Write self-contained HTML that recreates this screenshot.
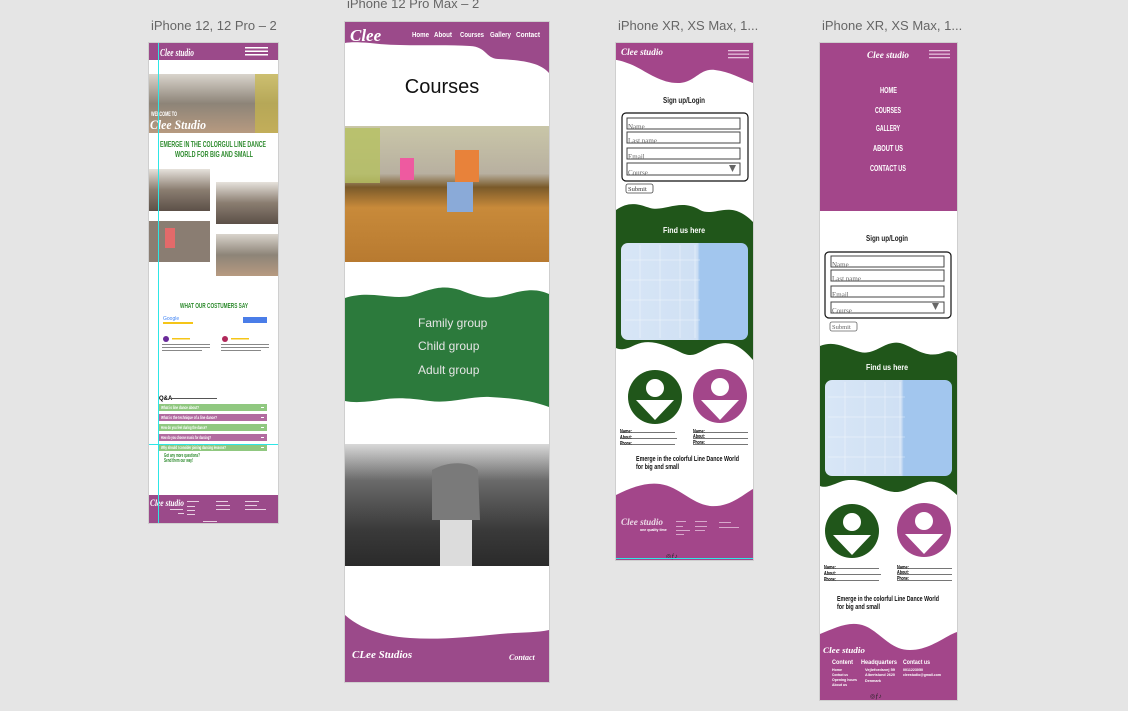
<!DOCTYPE html>
<html><head><meta charset="utf-8"><style>
html,body{margin:0;padding:0;background:#e5e5e5;width:1128px;height:711px;overflow:hidden}
svg{display:block}
.lbl{font-family:"Liberation Sans",sans-serif;font-size:13px;fill:#666}
.scr{font-family:"Liberation Serif",serif;font-style:italic;font-weight:bold;fill:#fff}
.nar{font-family:"Liberation Sans",sans-serif;font-weight:bold}
.sans{font-family:"Liberation Sans",sans-serif}
.ser{font-family:"Liberation Serif",serif}
</style></head><body>
<svg width="1128" height="711" viewBox="0 0 1128 711" xmlns="http://www.w3.org/2000/svg">
<defs>
<linearGradient id="ph1" x1="0" y1="0" x2="0" y2="1"><stop offset="0" stop-color="#d9d4cc"/><stop offset=".5" stop-color="#8d8478"/><stop offset="1" stop-color="#b79a80"/></linearGradient>
<linearGradient id="ph2" x1="0" y1="0" x2="0" y2="1"><stop offset="0" stop-color="#c9c6a8"/><stop offset=".35" stop-color="#b8b0a0"/><stop offset=".45" stop-color="#7a5a2a"/><stop offset=".6" stop-color="#c88a3a"/><stop offset="1" stop-color="#b87a30"/></linearGradient>
<linearGradient id="ph3" x1="0" y1="0" x2="0" y2="1"><stop offset="0" stop-color="#d8d8d8"/><stop offset=".3" stop-color="#6a6a6a"/><stop offset=".7" stop-color="#3a3a3a"/><stop offset="1" stop-color="#2a2a2a"/></linearGradient>
<linearGradient id="ph4" x1="0" y1="0" x2="0" y2="1"><stop offset="0" stop-color="#e6e2dc"/><stop offset=".5" stop-color="#8a7d70"/><stop offset="1" stop-color="#5c5048"/></linearGradient>
<linearGradient id="map" x1="0" y1="0" x2="1" y2="0"><stop offset="0" stop-color="#d8e6f6"/><stop offset=".6" stop-color="#cfe0f4"/><stop offset=".62" stop-color="#a2c6ee"/><stop offset="1" stop-color="#a2c6ee"/></linearGradient>
</defs>

<text class="lbl" x="151" y="30">iPhone 12, 12 Pro – 2</text>
<text class="lbl" x="347" y="8">iPhone 12 Pro Max – 2</text>
<text class="lbl" x="618" y="30">iPhone XR, XS Max, 1...</text>
<text class="lbl" x="822" y="30">iPhone XR, XS Max, 1...</text>

<!-- ===== Artboard 1 ===== -->
<rect x="148" y="42" width="131" height="482" fill="#cfcfcf"/>
<rect x="149" y="43" width="129" height="480" fill="#fff"/>
<rect x="149" y="43" width="129" height="17" fill="#9b4a8a"/>
<text class="scr" x="160" y="56" font-size="10" textLength="34" lengthAdjust="spacingAndGlyphs">Clee studio</text>
<rect x="245" y="47" width="23" height="1.5" fill="#fff"/><rect x="245" y="50.5" width="23" height="1.5" fill="#fff"/><rect x="245" y="54" width="23" height="1.5" fill="#fff"/>
<rect x="149" y="74" width="129" height="59" fill="url(#ph1)"/>
<rect x="255" y="74" width="23" height="59" fill="#c8b64a" opacity=".7"/>
<text class="nar" x="151" y="116" font-size="6" fill="#fff" textLength="26" lengthAdjust="spacingAndGlyphs">WELCOME TO</text>
<text class="scr" x="150" y="129" font-size="13" textLength="56" lengthAdjust="spacingAndGlyphs">Clee Studio</text>
<text class="nar" x="160" y="147" font-size="8" fill="#2e8b2e" textLength="106" lengthAdjust="spacingAndGlyphs">EMERGE IN THE COLORGUL LINE DANCE</text>
<text class="nar" x="175" y="157" font-size="8" fill="#2e8b2e" textLength="78" lengthAdjust="spacingAndGlyphs">WORLD FOR BIG AND SMALL</text>
<rect x="149" y="169" width="61" height="42" fill="url(#ph4)"/>
<rect x="216" y="182" width="62" height="42" fill="url(#ph4)"/>
<rect x="149" y="221" width="61" height="41" fill="#8a7d72"/>
<rect x="165" y="228" width="10" height="20" fill="#e36a6a"/>
<rect x="216" y="234" width="62" height="42" fill="url(#ph1)"/>
<text class="nar" x="180" y="308" font-size="7" fill="#2e8b2e" textLength="68" lengthAdjust="spacingAndGlyphs">WHAT OUR COSTUMERS SAY</text>
<text class="sans" x="163" y="320" font-size="5" fill="#4285f4">Google</text>
<rect x="163" y="322" width="30" height="2" fill="#f5c518"/>
<rect x="243" y="317" width="24" height="6" fill="#4a7de8"/>
<circle cx="166" cy="339" r="3" fill="#6a2a9a"/><circle cx="225" cy="339" r="3" fill="#b0285a"/>
<rect x="172" y="338" width="18" height="1.5" fill="#f5c518"/><rect x="231" y="338" width="18" height="1.5" fill="#f5c518"/>
<rect x="162" y="344" width="48" height="1" fill="#888"/><rect x="162" y="347" width="48" height="1" fill="#888"/><rect x="162" y="350" width="40" height="1" fill="#888"/>
<rect x="221" y="344" width="48" height="1" fill="#888"/><rect x="221" y="347" width="48" height="1" fill="#888"/><rect x="221" y="350" width="40" height="1" fill="#888"/>
<text class="nar" x="159" y="400" font-size="6" fill="#000">Q&amp;A</text>
<rect x="172" y="398" width="45" height="1" fill="#555"/>
<rect x="158" y="404" width="109" height="7" fill="#90c880"/>
<rect x="158" y="414" width="109" height="7" fill="#b26ba0"/>
<rect x="158" y="424" width="109" height="7" fill="#90c880"/>
<rect x="158" y="434" width="109" height="7" fill="#b26ba0"/>
<rect x="158" y="444" width="109" height="7" fill="#90c880"/>
<g class="nar" font-size="4.5" fill="#fff"><text x="161" y="409" textLength="38" lengthAdjust="spacingAndGlyphs">What is line dance about?</text><text x="161" y="419" textLength="56" lengthAdjust="spacingAndGlyphs">What is the technique of a line dance?</text><text x="161" y="429" textLength="46" lengthAdjust="spacingAndGlyphs">How do you feel during the dance?</text><text x="161" y="439" textLength="50" lengthAdjust="spacingAndGlyphs">How do you choose music for dancing?</text><text x="161" y="449" textLength="65" lengthAdjust="spacingAndGlyphs">Why should I consider joining dancing lessons?</text></g>
<rect x="261" y="407" width="3" height="1" fill="#fff"/><rect x="261" y="417" width="3" height="1" fill="#fff"/><rect x="261" y="427" width="3" height="1" fill="#fff"/><rect x="261" y="437" width="3" height="1" fill="#fff"/><rect x="261" y="447" width="3" height="1" fill="#fff"/>
<text class="nar" x="164" y="457" font-size="5" fill="#2e8b2e" textLength="36" lengthAdjust="spacingAndGlyphs">Got any more questions?</text>
<text class="nar" x="164" y="462" font-size="5" fill="#2e8b2e" textLength="29" lengthAdjust="spacingAndGlyphs">Send them our way!</text>
<rect x="149" y="495" width="129" height="28" fill="#9b4a8a"/>
<text class="scr" x="150" y="506" font-size="9" textLength="34" lengthAdjust="spacingAndGlyphs">Clee studio</text>
<g fill="#e8cfe2"><rect x="170" y="509" width="13" height="1"/><rect x="178" y="513" width="6" height="1"/><rect x="187" y="501" width="12" height="1"/><rect x="216" y="501" width="12" height="1"/><rect x="245" y="501" width="14" height="1"/><rect x="187" y="506" width="8" height="1"/><rect x="187" y="510" width="8" height="1"/><rect x="187" y="514" width="8" height="1"/><rect x="216" y="505" width="14" height="1"/><rect x="216" y="509" width="14" height="1"/><rect x="245" y="505" width="12" height="1"/><rect x="245" y="509" width="21" height="1"/><rect x="203" y="521" width="14" height="1"/></g>
<rect x="158" y="43" width="1" height="480" fill="#2ee6e6"/>
<rect x="149" y="444" width="129" height="1" fill="#2ee6e6"/>

<!-- ===== Artboard 2 ===== -->
<rect x="344" y="21" width="206" height="662" fill="#cfcfcf"/>
<rect x="345" y="22" width="204" height="660" fill="#fff"/>
<path d="M345 22 H549 V73 C540 62 520 60 498 59 C485 58 487 47 470 46 C440 44 400 47 370 43 C358 42 350 42 345 43 Z" fill="#9b4a8a"/>
<text class="scr" x="350" y="41" font-size="17" font-weight="normal">Clee</text>
<g class="sans" font-size="7" font-weight="bold" fill="#fff"><text x="412" y="37" textLength="17" lengthAdjust="spacingAndGlyphs">Home</text><text x="434" y="37" textLength="18" lengthAdjust="spacingAndGlyphs">About</text><text x="460" y="37" textLength="24" lengthAdjust="spacingAndGlyphs">Courses</text><text x="490" y="37" textLength="21" lengthAdjust="spacingAndGlyphs">Gallery</text><text x="516" y="37" textLength="24" lengthAdjust="spacingAndGlyphs">Contact</text></g>
<text class="sans" x="442" y="93" font-size="20" fill="#111" text-anchor="middle">Courses</text>
<rect x="345" y="126" width="204" height="136" fill="url(#ph2)"/>
<rect x="345" y="128" width="35" height="55" fill="#b5c060" opacity=".8"/>
<rect x="455" y="150" width="24" height="32" fill="#e8823a"/>
<rect x="447" y="182" width="26" height="30" fill="#8aaad8"/>
<rect x="400" y="158" width="14" height="22" fill="#ee5aa0"/>
<path d="M345 298 C370 290 390 300 410 296 C430 290 440 284 460 290 C480 298 490 300 510 294 C530 288 540 290 549 294 V407 C530 400 510 398 490 397 C470 396 450 404 430 401 C410 398 395 397 380 400 C365 402 355 403 345 401 Z" fill="#2c7a3c"/>
<g class="sans" font-size="12" fill="#e6e6e6"><text x="418" y="327">Family group</text><text x="418" y="350">Child group</text><text x="418" y="374">Adult group</text></g>
<rect x="345" y="444" width="204" height="122" fill="url(#ph3)"/>
<path d="M432 470 C450 460 470 462 478 470 L480 520 L432 520 Z" fill="#7a7a7a"/>
<rect x="440" y="520" width="32" height="46" fill="#dcdcdc"/>
<path d="M345 615 C360 628 380 636 410 638 C440 640 470 637 500 634 C520 632 535 633 549 630 V682 H345 Z" fill="#9b4a8a"/>
<text class="scr" x="352" y="658" font-size="11">CLee Studios</text>
<text class="scr" x="509" y="660" font-size="8">Contact</text>

<!-- ===== Artboard 3 ===== -->
<rect x="615" y="42" width="139" height="519" fill="#cfcfcf"/>
<rect x="616" y="43" width="137" height="517" fill="#fff"/>
<path d="M616 43 H753 V83 C740 78 730 72 715 70 C700 68 695 82 680 83 C660 84 645 70 630 64 C622 61 618 60 616 60 Z" fill="#a3468a"/>
<text class="scr" x="621" y="55" font-size="9" textLength="42" lengthAdjust="spacingAndGlyphs">Clee studio</text>
<rect x="728" y="50" width="21" height="1.3" fill="#e5c0dc"/><rect x="728" y="53.5" width="21" height="1.3" fill="#e5c0dc"/><rect x="728" y="57" width="21" height="1.3" fill="#e5c0dc"/>
<text class="nar" x="663" y="103" font-size="8" font-weight="normal" fill="#222" textLength="42" lengthAdjust="spacingAndGlyphs">Sign up/Login</text>
<rect x="622" y="113" width="126" height="68" rx="4" fill="none" stroke="#111" stroke-width="1.2"/>
<g fill="#fff" stroke="#444" stroke-width="1"><rect x="627" y="118" width="113" height="11"/><rect x="627" y="132" width="113" height="11"/><rect x="627" y="148" width="113" height="11"/><rect x="627" y="163" width="113" height="12"/></g>
<g class="ser" font-size="7" fill="#666"><text x="628" y="129">Name</text><text x="628" y="143">Last name</text><text x="628" y="159">Email</text><text x="628" y="175">Course</text></g>
<path d="M729 165 H736 L732.5 172 Z" fill="#666"/>
<rect x="626" y="184" width="27" height="9" rx="2" fill="#fff" stroke="#444" stroke-width=".8"/>
<text class="ser" x="628" y="191" font-size="6.5" fill="#333">Submit</text>
<path d="M616 210 C630 200 640 205 650 208 C665 212 680 198 700 210 C715 218 730 198 753 222 V340 H616 Z" fill="#20561a"/>
<text class="nar" x="663" y="233" font-size="8" fill="#fff" textLength="42" lengthAdjust="spacingAndGlyphs">Find us here</text>
<rect x="621" y="243" width="127" height="97" rx="7" fill="url(#map)"/>
<g stroke="#fff" stroke-width=".5" opacity=".7"><path d="M625 260 H700 M625 280 H700 M625 300 H700 M625 320 H700 M640 245 V338 M660 245 V338 M680 245 V338 M695 245 V338"/></g>
<path d="M616 340 H753 V360 C740 345 730 340 715 345 C700 350 695 360 680 352 C665 345 650 338 635 345 C625 350 620 350 616 348 Z" fill="#20561a"/>
<circle cx="655" cy="397" r="27" fill="#20561a"/>
<circle cx="655" cy="388" r="9" fill="#fff"/><path d="M636 400 H674 L655 420 Z" fill="#fff"/>
<circle cx="720" cy="396" r="27" fill="#a3468a"/>
<circle cx="720" cy="387" r="9" fill="#fff"/><path d="M701 400 H739 L720 420 Z" fill="#fff"/>
<g class="nar" font-size="5" fill="#000"><text x="620" y="433" textLength="12" lengthAdjust="spacingAndGlyphs">Name:</text><text x="620" y="439" textLength="12" lengthAdjust="spacingAndGlyphs">About:</text><text x="620" y="445" textLength="12" lengthAdjust="spacingAndGlyphs">Phone:</text><text x="693" y="433" textLength="12" lengthAdjust="spacingAndGlyphs">Name:</text><text x="693" y="438" textLength="12" lengthAdjust="spacingAndGlyphs">About:</text><text x="693" y="444" textLength="12" lengthAdjust="spacingAndGlyphs">Phone:</text></g>
<g fill="#555"><rect x="620" y="432" width="55" height=".8"/><rect x="620" y="438" width="57" height=".8"/><rect x="620" y="444" width="55" height=".8"/><rect x="693" y="432" width="55" height=".8"/><rect x="693" y="438" width="55" height=".8"/><rect x="693" y="444" width="55" height=".8"/></g>
<text class="nar" x="636" y="461" font-size="7" font-weight="normal" fill="#111" textLength="103" lengthAdjust="spacingAndGlyphs">Emerge in the colorful Line Dance World</text>
<text class="nar" x="636" y="469" font-size="7" font-weight="normal" fill="#111" textLength="43" lengthAdjust="spacingAndGlyphs">for big and small</text>
<path d="M616 495 C630 488 645 482 660 484 C680 487 690 503 710 506 C730 508 745 493 753 489 V560 H616 Z" fill="#a3468a"/>
<text class="scr" x="621" y="525" font-size="9" fill="#d9b8d2" opacity=".8" textLength="42" lengthAdjust="spacingAndGlyphs">Clee studio</text>
<text class="nar" x="640" y="531" font-size="3.5" fill="#fff">one quality time</text>
<g fill="#e5c0dc"><rect x="676" y="521" width="10" height=".8"/><rect x="695" y="521" width="12" height=".8"/><rect x="719" y="522" width="12" height=".8"/><rect x="676" y="526" width="7" height=".8"/><rect x="676" y="530" width="14" height=".8"/><rect x="676" y="534" width="8" height=".8"/><rect x="695" y="526" width="12" height=".8"/><rect x="695" y="530" width="10" height=".8"/><rect x="719" y="527" width="20" height=".8"/></g>
<text class="sans" x="666" y="558" font-size="6" fill="#222">◎ƒ♪</text>
<rect x="616" y="558" width="137" height="1" fill="#2ee6e6"/>

<!-- ===== Artboard 4 ===== -->
<rect x="819" y="42" width="139" height="659" fill="#cfcfcf"/>
<rect x="820" y="43" width="137" height="657" fill="#fff"/>
<rect x="820" y="43" width="137" height="168" fill="#a3468a"/>
<text class="scr" x="867" y="58" font-size="9" textLength="42" lengthAdjust="spacingAndGlyphs">Clee studio</text>
<rect x="929" y="50" width="21" height="1.3" fill="#e5c0dc"/><rect x="929" y="53.5" width="21" height="1.3" fill="#e5c0dc"/><rect x="929" y="57" width="21" height="1.3" fill="#e5c0dc"/>
<g class="nar" font-size="8" fill="#fff"><text x="880" y="93" textLength="17" lengthAdjust="spacingAndGlyphs">HOME</text><text x="875" y="113" textLength="26" lengthAdjust="spacingAndGlyphs">COURSES</text><text x="876" y="131" textLength="24" lengthAdjust="spacingAndGlyphs">GALLERY</text><text x="873" y="151" textLength="30" lengthAdjust="spacingAndGlyphs">ABOUT US</text><text x="870" y="171" textLength="36" lengthAdjust="spacingAndGlyphs">CONTACT US</text></g>
<text class="nar" x="866" y="241" font-size="8" font-weight="normal" fill="#222" textLength="42" lengthAdjust="spacingAndGlyphs">Sign up/Login</text>
<rect x="825" y="252" width="126" height="66" rx="4" fill="none" stroke="#111" stroke-width="1.2"/>
<g fill="#fff" stroke="#444" stroke-width="1"><rect x="831" y="256" width="113" height="11"/><rect x="831" y="270" width="113" height="11"/><rect x="831" y="286" width="113" height="11"/><rect x="831" y="302" width="113" height="11"/></g>
<g class="ser" font-size="7" fill="#666"><text x="832" y="267">Name</text><text x="832" y="281">Last name</text><text x="832" y="297">Email</text><text x="832" y="313">Course</text></g>
<path d="M932 303 H939 L935.5 310 Z" fill="#666"/>
<rect x="830" y="322" width="27" height="9" rx="2" fill="#fff" stroke="#666" stroke-width=".8"/>
<text class="ser" x="832" y="329" font-size="6.5" fill="#666">Submit</text>
<path d="M820 346 C835 340 845 348 860 352 C875 356 885 340 900 343 C915 347 925 360 945 352 C950 350 955 352 957 356 V480 H820 Z" fill="#20561a"/>
<text class="nar" x="866" y="370" font-size="8" fill="#fff" textLength="42" lengthAdjust="spacingAndGlyphs">Find us here</text>
<rect x="825" y="380" width="127" height="96" rx="7" fill="url(#map)"/>
<g stroke="#fff" stroke-width=".5" opacity=".7"><path d="M828 397 H905 M828 417 H905 M828 437 H905 M828 457 H905 M845 382 V474 M865 382 V474 M885 382 V474 M900 382 V474"/></g>
<path d="M820 478 H957 V495 C945 484 935 478 920 484 C905 490 900 495 885 490 C870 484 855 476 840 482 C830 486 825 488 820 486 Z" fill="#20561a"/>
<circle cx="852" cy="531" r="27" fill="#20561a"/>
<circle cx="852" cy="522" r="9" fill="#fff"/><path d="M833 535 H871 L852 555 Z" fill="#fff"/>
<circle cx="924" cy="530" r="27" fill="#a3468a"/>
<circle cx="924" cy="521" r="9" fill="#fff"/><path d="M905 534 H943 L924 554 Z" fill="#fff"/>
<g class="nar" font-size="5" fill="#000"><text x="824" y="569" textLength="12" lengthAdjust="spacingAndGlyphs">Name:</text><text x="824" y="575" textLength="12" lengthAdjust="spacingAndGlyphs">About:</text><text x="824" y="581" textLength="12" lengthAdjust="spacingAndGlyphs">Phone:</text><text x="897" y="569" textLength="12" lengthAdjust="spacingAndGlyphs">Name:</text><text x="897" y="574" textLength="12" lengthAdjust="spacingAndGlyphs">About:</text><text x="897" y="580" textLength="12" lengthAdjust="spacingAndGlyphs">Phone:</text></g>
<g fill="#555"><rect x="824" y="568" width="55" height=".8"/><rect x="824" y="574" width="57" height=".8"/><rect x="824" y="580" width="55" height=".8"/><rect x="897" y="568" width="55" height=".8"/><rect x="897" y="574" width="55" height=".8"/><rect x="897" y="580" width="55" height=".8"/></g>
<text class="nar" x="837" y="601" font-size="7" font-weight="normal" fill="#111" textLength="102" lengthAdjust="spacingAndGlyphs">Emerge in the colorful Line Dance World</text>
<text class="nar" x="837" y="609" font-size="7" font-weight="normal" fill="#111" textLength="43" lengthAdjust="spacingAndGlyphs">for big and small</text>
<path d="M820 634 C835 628 850 620 865 626 C880 632 890 650 910 650 C930 650 945 636 957 632 V700 H820 Z" fill="#a3468a"/>
<text class="scr" x="823" y="653" font-size="8" textLength="42" lengthAdjust="spacingAndGlyphs">Clee studio</text>
<g class="nar" font-size="6.5" fill="#fff"><text x="832" y="664" textLength="21" lengthAdjust="spacingAndGlyphs">Content</text><text x="861" y="664" textLength="36" lengthAdjust="spacingAndGlyphs">Headquarters</text><text x="903" y="664" textLength="27" lengthAdjust="spacingAndGlyphs">Contact us</text></g>
<g class="nar" font-size="4" fill="#fff"><text x="832" y="671" textLength="10" lengthAdjust="spacingAndGlyphs">Home</text><text x="832" y="676" textLength="16" lengthAdjust="spacingAndGlyphs">Contact us</text><text x="832" y="681" textLength="25" lengthAdjust="spacingAndGlyphs">Opening hours</text><text x="832" y="686" textLength="15" lengthAdjust="spacingAndGlyphs">About us</text><text x="865" y="671" textLength="30" lengthAdjust="spacingAndGlyphs">Vejlefordsvej 59</text><text x="865" y="676" textLength="30" lengthAdjust="spacingAndGlyphs">Albertslund 2620</text><text x="865" y="682" textLength="16" lengthAdjust="spacingAndGlyphs">Denmark</text><text x="903" y="671" textLength="20" lengthAdjust="spacingAndGlyphs">0011223050</text><text x="903" y="676" textLength="38" lengthAdjust="spacingAndGlyphs">cleestudio@gmail.com</text></g>
<text class="sans" x="870" y="698" font-size="6" fill="#222">◎ƒ♪</text>
</svg>
</body></html>
